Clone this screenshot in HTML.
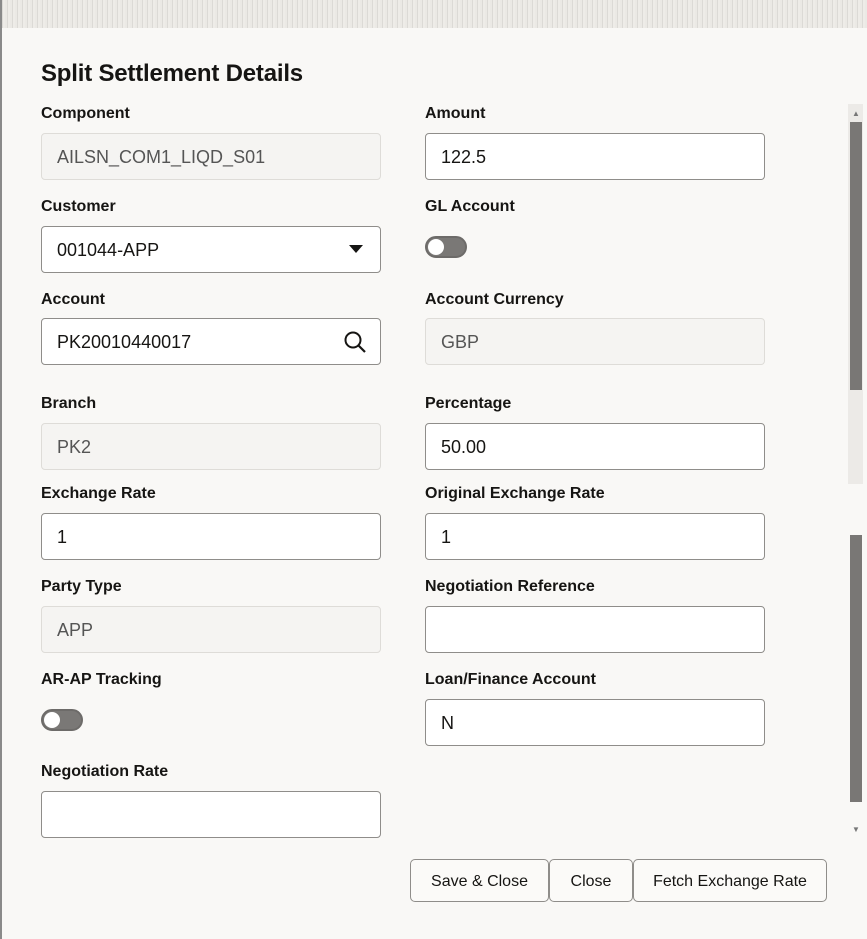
<!DOCTYPE html>
<html><head><style>
*{box-sizing:border-box;margin:0;padding:0}
body{width:867px;height:939px;background:#f9f8f6;font-family:"Liberation Sans",sans-serif;position:relative;overflow:hidden}
.top{position:absolute;left:0;top:0;width:867px;height:28px;background:#e4e2de;background-image:repeating-linear-gradient(90deg,#ebe9e5 0 2px,#dcdad6 2px 3px,#eeece8 3px 5px)}
.edge{position:absolute;left:0;top:0;width:2px;height:939px;background:#8a8a8a}
.title{position:absolute;left:41px;top:60px;font-size:24px;font-weight:bold;color:#161513;letter-spacing:-0.2px}
.lbl{position:absolute;font-size:16px;color:#161513;font-weight:600}
.in{position:absolute;width:340px;height:47px;border:1px solid #8f8d8a;border-radius:4px;background:#fff;font-size:18px;color:#161513;padding:13px 0 0 15px}
.ro{background:#f5f4f2;border-color:#dedcd8;color:#555}
.tg{position:absolute;width:42px;height:22px;border-radius:11px;background:#7a7876;border:2px solid #6d6b69}
.tg:after{content:"";position:absolute;left:1px;top:1px;width:16px;height:16px;border-radius:8px;background:#fff}
.btn{position:absolute;top:859px;height:43px;border:1px solid #8f8d8a;border-radius:5px;background:#fbfaf8;font-size:16px;color:#161513;text-align:center;line-height:43px}
.sb{position:absolute;left:848px;background:#eceae7;width:15px}
.th{position:absolute;left:850px;width:12px;background:#797775}
</style></head><body>
<div class="top"></div><div class="edge"></div>
<div class="title">Split Settlement Details</div>

<div class="lbl" style="left:41px;top:105px">Component</div>
<div class="in ro" style="left:41px;top:133px">AILSN_COM1_LIQD_S01</div>
<div class="lbl" style="left:425px;top:105px">Amount</div>
<div class="in" style="left:425px;top:133px">122.5</div>

<div class="lbl" style="left:41px;top:198px">Customer</div>
<div class="in" style="left:41px;top:226px">001044-APP<svg style="position:absolute;right:17px;top:18px" width="14" height="8"><path d="M0 0H14L7 8Z" fill="#161513"/></svg></div>
<div class="lbl" style="left:425px;top:198px">GL Account</div>
<div class="tg" style="left:425px;top:236px"></div>

<div class="lbl" style="left:41px;top:291px">Account</div>
<div class="in" style="left:41px;top:318px">PK20010440017<svg style="position:absolute;right:13px;top:11px" width="24" height="24"><circle cx="10" cy="10" r="7.5" fill="none" stroke="#161513" stroke-width="2"/><path d="M15.5 15.5L22 22" stroke="#161513" stroke-width="2.2"/></svg></div>
<div class="lbl" style="left:425px;top:291px">Account Currency</div>
<div class="in ro" style="left:425px;top:318px">GBP</div>

<div class="lbl" style="left:41px;top:395px">Branch</div>
<div class="in ro" style="left:41px;top:423px">PK2</div>
<div class="lbl" style="left:425px;top:395px">Percentage</div>
<div class="in" style="left:425px;top:423px">50.00</div>

<div class="lbl" style="left:41px;top:485px">Exchange Rate</div>
<div class="in" style="left:41px;top:513px">1</div>
<div class="lbl" style="left:425px;top:485px">Original Exchange Rate</div>
<div class="in" style="left:425px;top:513px">1</div>

<div class="lbl" style="left:41px;top:578px">Party Type</div>
<div class="in ro" style="left:41px;top:606px">APP</div>
<div class="lbl" style="left:425px;top:578px">Negotiation Reference</div>
<div class="in" style="left:425px;top:606px"></div>

<div class="lbl" style="left:41px;top:671px">AR-AP Tracking</div>
<div class="tg" style="left:41px;top:709px"></div>
<div class="lbl" style="left:425px;top:671px">Loan/Finance Account</div>
<div class="in" style="left:425px;top:699px">N</div>

<div class="lbl" style="left:41px;top:763px">Negotiation Rate</div>
<div class="in" style="left:41px;top:791px"></div>

<div class="btn" style="left:410px;width:139px">Save &amp; Close</div>
<div class="btn" style="left:549px;width:84px">Close</div>
<div class="btn" style="left:633px;width:194px">Fetch Exchange Rate</div>

<div class="sb" style="top:104px;height:380px"></div>
<div style="position:absolute;left:852px;top:109px;font-size:8px;color:#777">▲</div>
<div class="th" style="top:122px;height:268px"></div>
<div class="th" style="top:535px;height:267px"></div>
<div style="position:absolute;left:852px;top:825px;font-size:8px;color:#777">▼</div>
</body></html>
